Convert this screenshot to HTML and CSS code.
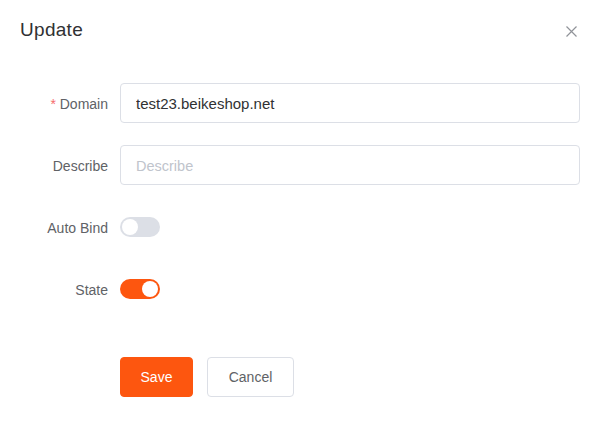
FILE: index.html
```html
<!DOCTYPE html>
<html>
<head>
<meta charset="utf-8">
<link rel="stylesheet" href="styles.css">
</head>
<body>
<div class="dialog">
  <div class="header">
    <span class="title">Update</span>
    <button class="close" aria-label="Close">
      <svg width="11" height="11" viewBox="0 0 11 11"><path d="M0.5 0.5 L10.5 10.5 M10.5 0.5 L0.5 10.5" stroke="#909399" stroke-width="1.2" fill="none"/></svg>
    </button>
  </div>
  <form class="form">
    <div class="item">
      <label class="label"><span class="req">*</span> Domain</label>
      <div class="content"><input class="input" value="test23.beikeshop.net"></div>
    </div>
    <div class="item">
      <label class="label">Describe</label>
      <div class="content"><input class="input" placeholder="Describe"></div>
    </div>
    <div class="item">
      <label class="label">Auto Bind</label>
      <div class="content"><span class="switch"><span class="knob"></span></span></div>
    </div>
    <div class="item">
      <label class="label">State</label>
      <div class="content"><span class="switch on"><span class="knob"></span></span></div>
    </div>
    <div class="actions">
      <button type="button" class="btn primary">Save</button>
      <button type="button" class="btn">Cancel</button>
    </div>
  </form>
</div>
</body>
</html>
```
FILE: styles.css
```css
* { box-sizing: border-box; }
html, body { margin: 0; padding: 0; background: #fff; }
body { font-family: "Liberation Sans", Arial, sans-serif; color: #606266; }
.dialog { width: 598px; height: 448px; }
.header { display: flex; justify-content: space-between; align-items: center; padding: 18px 21px 0 20px; height: 24px; box-sizing: content-box; }
.title { font-size: 19px; letter-spacing: 0.3px; line-height: 24px; color: #303133; }
.close { border: 0; background: none; padding: 0; width: 11px; height: 11px; display: flex; cursor: pointer; margin-top: 2px; }
.form { padding: 41px 18px 0 20px; }
.item { display: flex; height: 40px; margin-bottom: 22px; }
.label { width: 100px; padding: 1px 12px 0 0; text-align: right; font-size: 14px; line-height: 40px; color: #606266; }
.req { color: #f56c6c; }
.content { flex: 1; display: flex; align-items: center; }
.input { width: 100%; height: 40px; border: 1px solid #dcdfe6; border-radius: 4px; padding: 1px 15px 0; font-family: inherit; font-size: 15px; color: #303133; outline: none; }
.input::placeholder { color: #c0c4cc; font-size: 14.5px; }
.switch { position: relative; display: inline-block; width: 40px; height: 20px; border-radius: 10px; background: #dcdfe6; }
.switch.on { background: #fd560f; }
.knob { position: absolute; top: 2px; left: 2px; width: 16px; height: 16px; border-radius: 50%; background: #fff; }
.switch.on .knob { left: 22px; }
.actions { display: flex; gap: 14px; margin: 48px 0 0 100px; }
.btn { height: 40px; border-radius: 4px; border: 1px solid #dcdfe6; background: #fff; color: #606266; font-family: inherit; font-size: 14px; width: 87px; padding: 0; }
.btn.primary { width: 73px; background: #fd560f; border-color: #fd560f; color: #fff; }
```
